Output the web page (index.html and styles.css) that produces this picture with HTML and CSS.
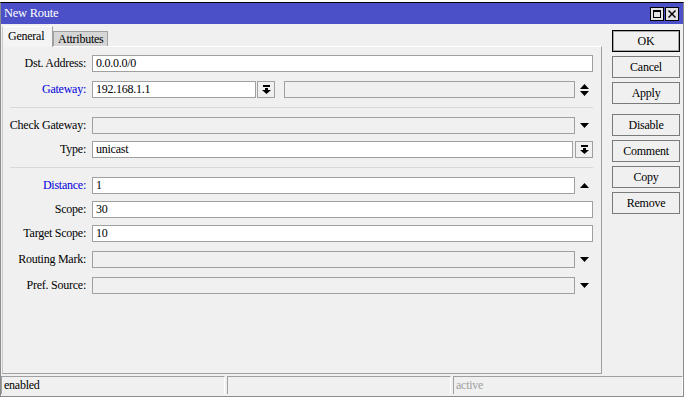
FILE: index.html
```html
<!DOCTYPE html>
<html lang="en">
  <head>
    <meta charset="UTF-8">
    <title>New Route</title>
    <link rel="stylesheet" href="styles.css">
  </head>
  <body>
    <div class="desktop"></div>
    <div class="window">
      <div class="titlebar">
        <span class="title">New Route</span>
        <div class="title-buttons">
          <span class="tbtn">
            <svg width="8" height="8" viewBox="0 0 8 8"><path d="M0 0h8v8H0z M1 2v5h6V2z" fill-rule="evenodd"/></svg>
          </span>
          <span class="tbtn">
            <svg width="8" height="8" viewBox="0 0 8 8"><path d="M1 0l3 3 3-3 1 1-3 3 3 3-1 1-3-3-3 3-1-1 3-3-3-3z"/></svg>
          </span>
        </div>
      </div>

      <div class="content">
        <div class="main">
          <div class="tabs">
            <span class="tab tab--active">General</span>
            <span class="tab">Attributes</span>
          </div>

          <div class="panel">
            <div class="section section--wide">
              <div class="row">
                <span class="label">Dst. Address:</span>
                <div class="field">0.0.0.0/0</div>
              </div>
              <div class="row">
                <span class="label label--blue">Gateway:</span>
                <div class="field field--short">192.168.1.1</div>
                <span class="dropbtn dropbtn--near">
                  <svg width="9" height="9" viewBox="0 0 9 9"><path d="M1 0h7v2H1z M3 3h3v2H3z M0 5h9L4.5 9z"/></svg>
                </span>
                <div class="field field--off field--gap"></div>
                <span class="arrow">
                  <svg width="9" height="12" viewBox="0 0 9 12"><path d="M4.5 0L9 5H0z M0 7h9L4.5 12z"/></svg>
                </span>
              </div>
            </div>

            <div class="sep"></div>

            <div class="section">
              <div class="row">
                <span class="label">Check Gateway:</span>
                <div class="field field--off"></div>
                <span class="arrow">
                  <svg width="9" height="5" viewBox="0 0 9 5"><path d="M0 0h9L4.5 5z"/></svg>
                </span>
              </div>
              <div class="row">
                <span class="label">Type:</span>
                <div class="field">unicast</div>
                <span class="dropbtn">
                  <svg width="9" height="9" viewBox="0 0 9 9"><path d="M1 0h7v2H1z M3 3h3v2H3z M0 5h9L4.5 9z"/></svg>
                </span>
              </div>
            </div>

            <div class="sep"></div>

            <div class="section">
              <div class="row">
                <span class="label label--blue">Distance:</span>
                <div class="field">1</div>
                <span class="arrow">
                  <svg width="9" height="5" viewBox="0 0 9 5"><path d="M4.5 0L9 5H0z"/></svg>
                </span>
              </div>
              <div class="row">
                <span class="label">Scope:</span>
                <div class="field">30</div>
              </div>
              <div class="row">
                <span class="label">Target Scope:</span>
                <div class="field">10</div>
              </div>
              <div class="row row--loose">
                <span class="label">Routing Mark:</span>
                <div class="field field--off"></div>
                <span class="arrow">
                  <svg width="9" height="5" viewBox="0 0 9 5"><path d="M0 0h9L4.5 5z"/></svg>
                </span>
              </div>
              <div class="row row--loose">
                <span class="label">Pref. Source:</span>
                <div class="field field--off"></div>
                <span class="arrow">
                  <svg width="9" height="5" viewBox="0 0 9 5"><path d="M0 0h9L4.5 5z"/></svg>
                </span>
              </div>
            </div>
          </div>
        </div>

        <div class="buttons">
          <span class="btn btn--default">OK</span>
          <span class="btn">Cancel</span>
          <span class="btn">Apply</span>
          <span class="btn btn--group">Disable</span>
          <span class="btn">Comment</span>
          <span class="btn">Copy</span>
          <span class="btn">Remove</span>
        </div>
      </div>

      <div class="statusbar">
        <span class="cell">enabled</span>
        <span class="cell"></span>
        <span class="cell cell--dim">active</span>
      </div>
    </div>
  </body>
</html>
```

FILE: styles.css
```css
html,
body {
  margin: 0;
  background-color: #fff;
  font-family: "Liberation Serif", serif;
  font-size: 12px;
  letter-spacing: -0.25px;
  color: #000;
}

.desktop {
  height: 2px;
  background-color: #fff;
}

.window {
  height: 395px;
  box-sizing: border-box;
  display: flex;
  flex-direction: column;
  background-color: #f0f0f0;
  border: 1px solid #8c8c8c;
  border-top-color: #000;
}

.titlebar {
  height: 21px;
  display: flex;
  align-items: center;
  justify-content: space-between;
  padding: 0 4px 0 3px;
  background-color: #4b4fc8;
  color: #fff;
}

.title {
  font-size: 12.5px;
}

.title-buttons {
  display: flex;
  gap: 1px;
}

.tbtn {
  width: 14px;
  height: 14px;
  box-sizing: border-box;
  display: flex;
  align-items: center;
  justify-content: center;
  background-color: #e4e4e4;
  border: 1px solid #000;
}

.content {
  height: 350px;
  display: flex;
}

.main {
  width: 600px;
  margin-left: 1px;
  display: flex;
  flex-direction: column;
}

.tabs {
  height: 22px;
  display: flex;
  align-items: flex-end;
}

.tab {
  height: 14px;
  line-height: 14px;
  padding: 0 3px 0 4px;
  background-color: #d6d6d6;
  border: 1px solid #a0a0a0;
  border-bottom: none;
}

.tab--active {
  position: relative;
  z-index: 1;
  height: 20px;
  line-height: 18px;
  width: 44px;
  margin-bottom: -1px;
  padding: 0 0 0 5px;
  background-color: #f4f4f4;
  border-color: #fff #a0a0a0 #fff #c8c8c8;
}

.panel {
  flex: 1;
  padding: 8px 8px 0 0;
  border: 1px solid #a0a0a0;
  border-top-color: #fff;
  border-left-color: #c8c8c8;
}

.section {
  display: flex;
  flex-direction: column;
  gap: 7px;
}

.section--wide {
  gap: 9px;
}

.sep {
  height: 0;
  margin: 9px 0 9px 7px;
  border-top: 1px solid #d8d8d8;
}

.row {
  height: 17px;
  display: flex;
  align-items: center;
}

.row--loose {
  margin-top: 2px;
}

.label {
  width: 83px;
  margin-right: 6px;
  text-align: right;
  white-space: nowrap;
}

.label--blue {
  color: #0000dc;
}

.field {
  flex: 1;
  height: 17px;
  box-sizing: border-box;
  padding: 0 3px;
  line-height: 15px;
  background-color: #fff;
  border: 1px solid #a0a0a0;
}

.field--short {
  flex: none;
  width: 164px;
}

.field--off {
  background-color: #f0f0f0;
}

.field--gap {
  margin-left: 9px;
}

.dropbtn {
  width: 18px;
  height: 17px;
  box-sizing: border-box;
  margin-left: 2px;
  display: flex;
  align-items: center;
  justify-content: center;
  background-color: #f0f0f0;
  border: 1px solid #a0a0a0;
}

.dropbtn--near {
  margin-left: 1px;
}

.arrow {
  width: 18px;
  height: 17px;
  display: flex;
  align-items: center;
  justify-content: center;
}

.buttons {
  width: 68px;
  margin: 6px 0 0 10px;
  display: flex;
  flex-direction: column;
  gap: 4px;
}

.btn {
  height: 22px;
  box-sizing: border-box;
  line-height: 20px;
  text-align: center;
  background-color: #f0f0f0;
  border: 1px solid #7a7a7a;
}

.btn--default {
  border-color: #000;
  box-shadow: inset 0 0 0 1px #a8a8a8;
}

.btn--group {
  margin-top: 6px;
}

.statusbar {
  height: 18px;
  margin-top: 2px;
  display: grid;
  grid-template-columns: 224px 224px 1fr;
  gap: 2px;
}

.cell {
  box-sizing: border-box;
  padding-left: 2px;
  line-height: 17px;
  border-top: 1px solid #a0a0a0;
  border-left: 1px solid #a0a0a0;
  border-right: 1px solid #fff;
}

.cell--dim {
  color: #a0a0a0;
}
```
